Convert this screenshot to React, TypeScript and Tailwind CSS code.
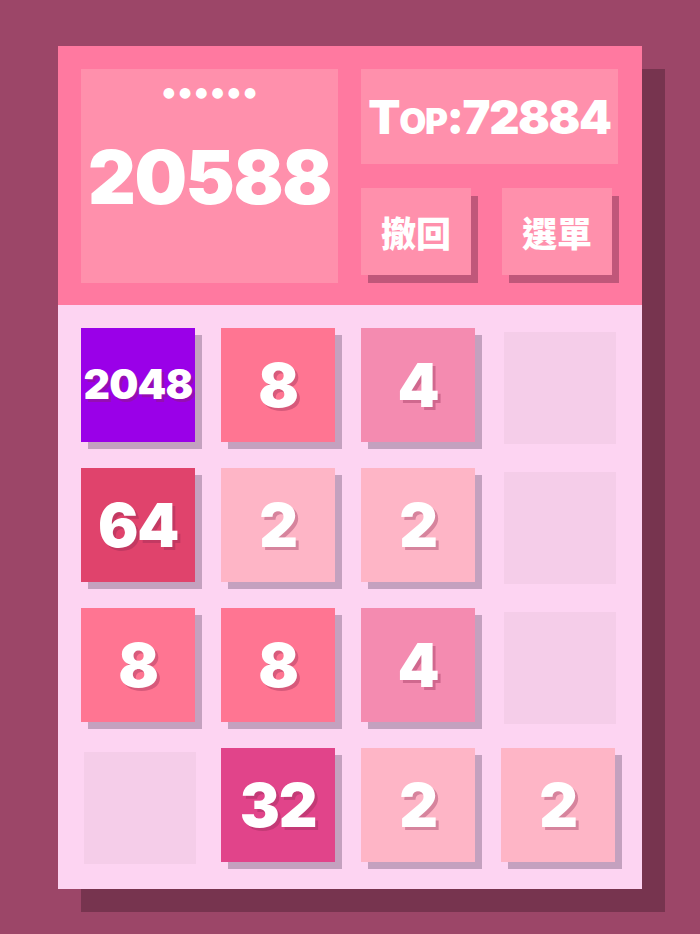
import React from 'react';

type Cell = number | null;

const board: Cell[][] = [
    [2048, 8, 4, null],
    [64, 2, 2, null],
    [8, 8, 4, null],
    [null, 32, 2, 2],
];

const tileColors: Record<number, string> = {
    2: 'bg-[#feb5c6]',
    4: 'bg-[#f48bb0]',
    8: 'bg-[#ff7592]',
    32: 'bg-[#e1448a]',
    64: 'bg-[#e0436c]',
    2048: 'bg-[#9a00e8]',
};

const numberFont = "font-['Inter','Liberation_Sans',sans-serif] font-black";

const Tile = ({ value }: { value: Cell }) => {
    if (value === null) {
        return (
            <div className="h-[114px] w-[114px]">
                <div className="ml-[3px] mt-1 h-[112px] w-[112px] bg-[#f5cde9]" />
            </div>
        );
    }
    const size = value >= 1000 ? 'text-[41px]' : 'text-[60px]';
    return (
        <div
            className={`flex h-[114px] w-[114px] items-center justify-center shadow-[7px_7px_0_#c4a1bf] ${tileColors[value]}`}
        >
            <span
                className={`${numberFont} ${size} leading-none tracking-[-0.02em] text-white [text-shadow:3px_3px_0_rgba(140,40,80,0.35)]`}
            >
                {value}
            </span>
        </div>
    );
};

const App = () => {
    return (
        <div className="flex h-[934px] w-full items-center justify-center bg-[#9c4668]">
            <div className="w-[584px] shadow-[23px_23px_0_#77344f]">
                {/* score header */}
                <div className="flex h-[259px] gap-[23px] bg-[#ff79a0] px-[23px] pt-[23px]">
                    <div className="flex h-[214px] w-[257px] flex-col items-center bg-[#ff90ac]">
                        <div className="mt-[16px] pl-[4px] font-['DejaVu_Sans',sans-serif] text-[14px] leading-none tracking-[4px] text-white">
                            ●●●●●●
                        </div>
                        <div className={`${numberFont} mt-[41px] text-[74px] leading-none tracking-[-0.02em] text-white`}>
                            20588
                        </div>
                    </div>
                    <div className="flex w-[257px] flex-col">
                        <div className="flex h-[95px] items-center justify-center bg-[#ff90ac]">
                            <span className={`${numberFont} text-[47px] leading-none tracking-[-0.03em] text-white`}>
                                T<span className="text-[35px]">OP</span>:72884
                            </span>
                        </div>
                        <div className="mt-[24px] flex justify-between pr-[6px]">
                            {['撤回', '選單'].map(label => (
                                <button
                                    key={label}
                                    className="flex h-[87px] w-[110px] items-center justify-center bg-[#ff90ac] shadow-[7px_8px_0_#c0577a]"
                                >
                                    <span className="font-['Noto_Sans_CJK_TC','Noto_Sans_CJK_SC',sans-serif] text-[35px] font-black leading-none text-white">
                                        {label}
                                    </span>
                                </button>
                            ))}
                        </div>
                    </div>
                </div>
                {/* game board */}
                <div className="h-[584px] bg-[#fdd4f2] pl-[23px] pt-[23px]">
                    <div className="grid grid-cols-[repeat(4,114px)] gap-[26px]">
                        {board.flat().map((value, i) => (
                            <Tile key={i} value={value} />
                        ))}
                    </div>
                </div>
            </div>
        </div>
    );
};

export default App;
